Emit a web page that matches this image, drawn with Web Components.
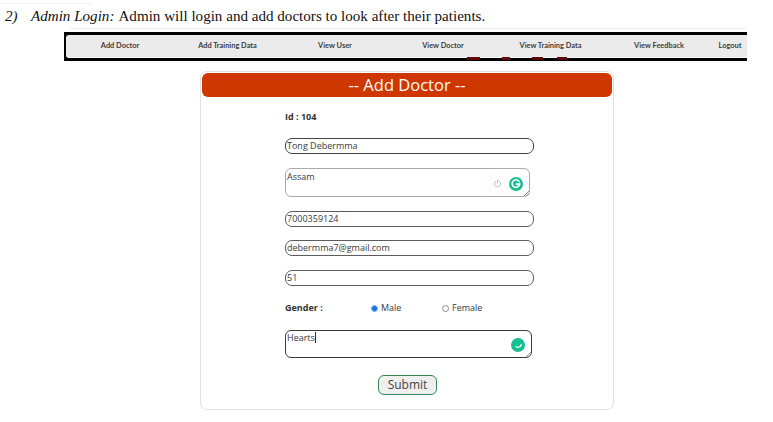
<!DOCTYPE html>
<html lang="en">
<head>
<meta charset="utf-8">
<title>Add Doctor</title>
<style>
html, body { margin: 0; padding: 0; background: #fff; }
body { width: 773px; height: 422px; overflow: hidden; font-family: "Open Sans", sans-serif; }
</style>
</head>
<body>
<doc-page>
  <doc-caption slot="caption"><i slot="label">Admin Login:</i>Admin will login and add doctors to look after their patients.</doc-caption>
  <doc-nav slot="nav">
    <nav-link style="width:108px">Add Doctor</nav-link>
    <nav-link style="width:107px">Add Training Data</nav-link>
    <nav-link style="width:108px">View User</nav-link>
    <nav-link style="width:108px">View Doctor</nav-link>
    <nav-link style="width:107px">View Training Data</nav-link>
    <nav-link style="width:110px">View Feedback</nav-link>
    <nav-link style="width:32px">Logout</nav-link>
  </doc-nav>
  <doctor-form slot="form">
    <form-id>Id : 104</form-id>
    <text-box style="margin-top:14px;width:249px" strong>Tong Debermma</text-box>
    <area-box style="margin-top:14px;width:245px;height:29px">Assam<grammarly-badge slot="badge" power></grammarly-badge></area-box>
    <text-box style="margin-top:14px;width:249px">7000359124</text-box>
    <text-box style="margin-top:13px;width:249px">debermma7@gmail.com</text-box>
    <text-box style="margin-top:14px;width:249px">51</text-box>
    <gender-row style="margin-top:15px"></gender-row>
    <area-box style="margin-top:15px;width:247px;height:28px" active>Hearts<grammarly-badge slot="badge" busy></grammarly-badge></area-box>
    <submit-button style="margin-top:17px">Submit</submit-button>
  </doctor-form>
</doc-page>
<script>
class DocPage extends HTMLElement {
  constructor() {
    super();
    this.attachShadow({mode: 'open'}).innerHTML = `<style>
      :host { display: flex; flex-direction: column; width: 773px; height: 422px; }
      .edge { height: 1px; margin-top: 3px; width: 92px; background: #f2f2f2; }
      .rule { height: 1px; margin-left: 70px; width: 676px; background: #f0f0f0; }
      .nav { margin: 3px 0 0 64px; }
      .form { margin: 10px 0 0 200px; }
    </style>
    <div class="edge"></div>
    <slot name="caption"></slot>
    <div class="rule"></div>
    <div class="nav"><slot name="nav"></slot></div>
    <div class="form"><slot name="form"></slot></div>`;
  }
}
window.customElements.define('doc-page', DocPage);

class DocCaption extends HTMLElement {
  constructor() {
    super();
    this.attachShadow({mode: 'open'}).innerHTML = `<style>
      :host { display: flex; height: 24px; box-sizing: border-box; padding: 2px 0 0 5px; font: 15.1px/20px "Liberation Serif", serif; color: #111; white-space: nowrap; }
      .num { width: 26px; font-style: italic; }
      .label { margin-right: 4px; }
    </style>
    <span class="num">2)</span>
    <span class="label"><slot name="label"></slot></span>
    <span><slot></slot></span>`;
  }
}
window.customElements.define('doc-caption', DocCaption);

class DocNav extends HTMLElement {
  constructor() {
    super();
    this.attachShadow({mode: 'open'}).innerHTML = `<style>
      :host { display: block; width: 683px; height: 29px; box-sizing: border-box; position: relative; background: #000; padding: 3px 0 4px 2px; }
      .bar { display: flex; height: 22px; background: #ebebeb; border-radius: 3px 0 0 3px; box-shadow: 0 1px 0 #fafafa; }
      svg { position: absolute; left: 403px; top: 25px; }
    </style>
    <div class="bar"><slot></slot></div>
    <svg width="110" height="3" viewBox="0 0 110 3">
      <rect x="0" y="0" width="13" height="3" fill="#5e0808"/>
      <rect x="35" y="0" width="8" height="3" fill="#6a0a0a"/>
      <rect x="65" y="0" width="11" height="3" fill="#560606"/>
      <rect x="90" y="0" width="10" height="3" fill="#5e0808"/>
    </svg>`;
  }
}
window.customElements.define('doc-nav', DocNav);

class NavLink extends HTMLElement {
  constructor() {
    super();
    this.attachShadow({mode: 'open'}).innerHTML = `<style>
      :host { display: flex; align-items: center; justify-content: center; font: 700 7.4px/10px Lato, sans-serif; color: #3c3c3c; white-space: nowrap; box-sizing: border-box; }
    </style><slot></slot>`;
  }
}
window.customElements.define('nav-link', NavLink);

class DoctorForm extends HTMLElement {
  constructor() {
    super();
    this.attachShadow({mode: 'open'}).innerHTML = `<style>
      :host { display: block; width: 414px; height: 339px; box-sizing: border-box; border: 1px solid #e2e2e2; border-radius: 7px; padding: 1px; }
      h2 { margin: 0; height: 24px; background: #cf3700; border-radius: 6px; color: #fff; font: 400 16.5px/24px "Open Sans", sans-serif; text-align: center; }
      .body { display: flex; flex-direction: column; align-items: flex-start; padding: 13px 0 0 83px; }
    </style>
    <h2>-- Add Doctor --</h2>
    <div class="body"><slot></slot></div>`;
  }
}
window.customElements.define('doctor-form', DoctorForm);

class FormId extends HTMLElement {
  constructor() {
    super();
    this.attachShadow({mode: 'open'}).innerHTML = `<style>
      :host { display: block; height: 14px; font: 700 9px/14px "Open Sans", sans-serif; color: #333; }
    </style><slot></slot>`;
  }
}
window.customElements.define('form-id', FormId);

class TextBox extends HTMLElement {
  constructor() {
    super();
    this.attachShadow({mode: 'open'}).innerHTML = `<style>
      :host { display: block; height: 16px; box-sizing: border-box; border: 1px solid #5c5c5c; border-top-width: 1.5px; border-radius: 7px; padding-left: 1px; font: 9px/13px "Open Sans", sans-serif; color: #3a3a3a; white-space: nowrap; }
      :host([strong]) { border-color: #444; }
    </style><slot></slot>`;
  }
}
window.customElements.define('text-box', TextBox);

class AreaBox extends HTMLElement {
  constructor() {
    super();
    this.attachShadow({mode: 'open'}).innerHTML = `<style>
      :host { display: block; position: relative; box-sizing: border-box; border: 1px solid #aaa; border-radius: 6px; padding: 2px 0 0 1px; font: 9px/12px "Open Sans", sans-serif; color: #3a3a3a; }
      :host([active]) { border: 1.5px solid #3c3c3c; padding-top: 1px; }
      :host([active]) .caret { display: inline-block; }
      .caret { display: none; width: 1px; height: 11px; background: #333; vertical-align: -2px; }
      svg { position: absolute; right: 0; bottom: 0; }
    </style>
    <slot></slot><span class="caret"></span>
    <slot name="badge"></slot>
    <svg width="6" height="6" viewBox="0 0 6 6"><path d="M1 6 6 1M3.5 6 6 3.5" stroke="#777" stroke-width=".8"/></svg>`;
  }
}
window.customElements.define('area-box', AreaBox);

class GrammarlyBadge extends HTMLElement {
  constructor() {
    super();
    const busy = this.hasAttribute('busy');
    const ring = busy
      ? '<path d="M10.4 6.4a3.4 3.4 0 0 1-5.4 2.2" fill="none" stroke="#fff" stroke-width="1.2" stroke-linecap="round"/>'
      : '<path d="M10.2 4.6a3.8 3.8 0 1 0 .5 2.5H7.3" fill="none" stroke="#fff" stroke-width="1.6" stroke-linecap="round"/>';
    const power = this.hasAttribute('power')
      ? `<svg class="pw" width="9" height="9" viewBox="0 0 9 9"><path d="M2.9 2.1a3.1 3.1 0 1 0 3.2 0M4.5 1v3" fill="none" stroke="#a9adb5" stroke-width=".8" stroke-linecap="round"/></svg>`
      : '';
    this.attachShadow({mode: 'open'}).innerHTML = `<style>
      :host { position: absolute; right: 6px; top: 50%; transform: translateY(-50%); display: flex; align-items: center; gap: 7px; }
      :host([power]) { right: 3px; top: 5px; height: 19px; transform: none; padding: 0 3px 0 8px; background: #fff; border-radius: 10px; box-shadow: 0 0 3px rgba(0,0,0,.06); }
      :host([busy]) { top: 7px; transform: none; }
      .dot { width: 14px; height: 14px; border-radius: 50%; background: #15bf94; display: block; }
    </style>
    ${power}
    <svg class="dot" viewBox="0 0 14 14">${ring}</svg>`;
  }
}
window.customElements.define('grammarly-badge', GrammarlyBadge);

class GenderRow extends HTMLElement {
  constructor() {
    super();
    this.attachShadow({mode: 'open'}).innerHTML = `<style>
      :host { display: flex; align-items: center; height: 14px; font: 9px/14px "Open Sans", sans-serif; color: #3a3a3a; white-space: nowrap; }
      b { width: 86px; color: #333; }
      .opt { display: flex; align-items: center; gap: 3px; }
      .male { width: 71px; }
      .radio { width: 7px; height: 7px; box-sizing: border-box; border-radius: 50%; border: 1px solid #8a8a8a; background: #fff; }
      .on { border: 1px solid #5a9bf0; background: radial-gradient(circle, #1a73e8 0 2.2px, #fff 2.7px); }
    </style>
    <b>Gender :</b>
    <span class="opt male"><span class="radio on"></span>Male</span>
    <span class="opt"><span class="radio"></span>Female</span>`;
  }
}
window.customElements.define('gender-row', GenderRow);

class SubmitButton extends HTMLElement {
  constructor() {
    super();
    this.attachShadow({mode: 'open'}).innerHTML = `<style>
      :host { display: block; align-self: flex-start; margin-left: 93px; width: 59px; height: 20px; box-sizing: border-box; border: 1px solid #2f8a55; border-radius: 6px; background: #efefef; text-align: center; font: 12px/18px "Open Sans", sans-serif; color: #444; }
    </style><slot></slot>`;
  }
}
window.customElements.define('submit-button', SubmitButton);
</script>
</body>
</html>
